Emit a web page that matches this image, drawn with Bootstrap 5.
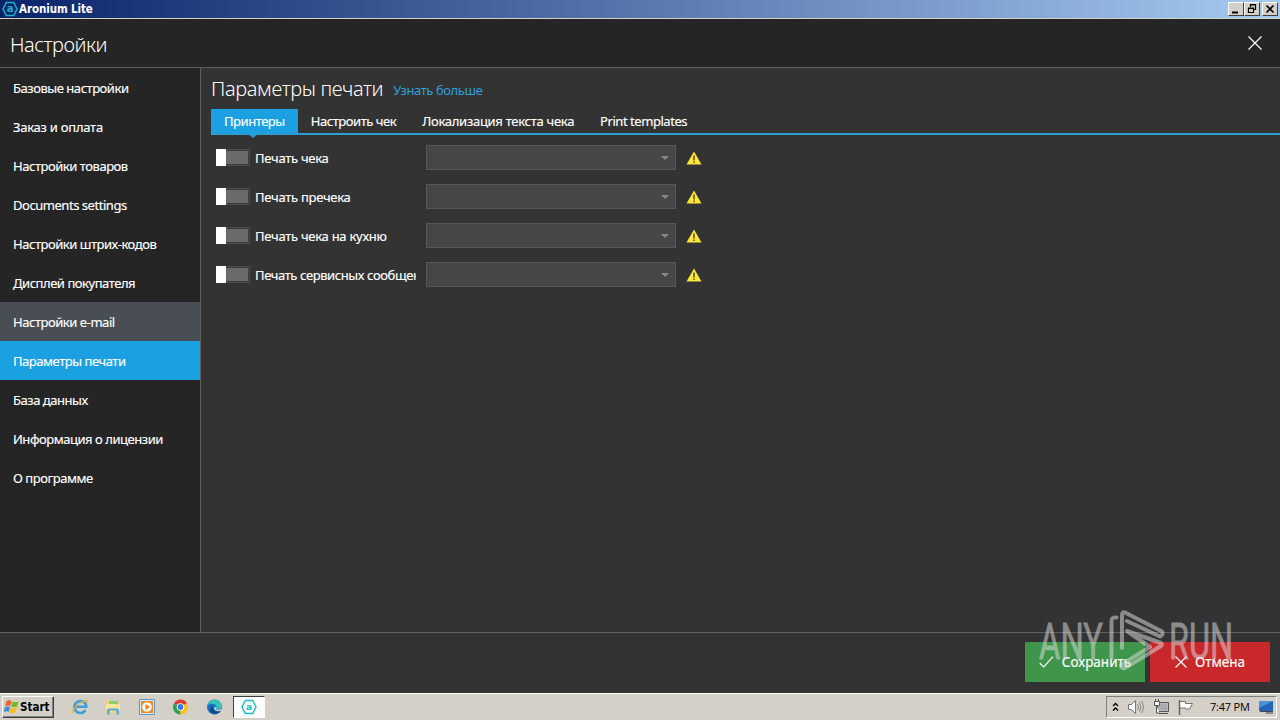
<!DOCTYPE html>
<html lang="ru">
<head>
    <meta charset="UTF-8">
    <meta name="viewport" content="width=device-width, initial-scale=1.0">
    <title>Aronium Lite</title>
    <!-- Bootstrap CSS -->
    <link href="https://cdn.jsdelivr.net/npm/bootstrap@5.3.0/dist/css/bootstrap.min.css" rel="stylesheet">
    <style>
        body {
            height: 720px;
            background-color: #333;
            color: #fff;
            font-family: "Noto Sans", "Open Sans", sans-serif;
            font-size: 13px;
            line-height: 18px;
        }
        svg {
            display: block;
            flex-shrink: 0;
        }
        .titlebar {
            height: 19px;
            background: linear-gradient(90deg, #0a246a, #a6caf0);
            border-bottom: 1px solid #d4d0c8;
            font: bold 11px/17px "DejaVu Sans", sans-serif;
            padding: 0 2px;
        }
        .titlebar .app-name {
            font: bold 11.5px/17px "DejaVu Sans Condensed", "DejaVu Sans", sans-serif;
            letter-spacing: -.1px;
            margin-left: 1px;
        }
        .win-btn {
            width: 16px;
            height: 14px;
            background-color: #d4d0c8;
            border: 1px solid;
            border-color: #fff #404040 #404040 #fff;
        }
        .win-btn:last-child {
            margin-left: 2px;
        }
        .page-head {
            height: 49px;
            background-color: #252525;
            border-bottom: 1px solid #606060;
            padding: 0 18px 0 10px;
        }
        .page-head h1 {
            font-size: 20px;
            font-weight: 300;
            line-height: 28px;
            letter-spacing: -.45px;
            padding-top: 3px;
        }
        .side-menu {
            width: 201px;
            background-color: #252525;
            border-right: 1px solid #606060;
            letter-spacing: -.46px;
            -webkit-text-stroke: .15px #fff;
        }
        .side-menu a {
            height: 39px;
            padding: 0 0 0 13px;
            color: #fff;
            text-decoration: none;
            display: flex;
            align-items: center;
        }
        .side-menu a.hovered {
            background-color: #494d54;
        }
        .side-menu a.active {
            background-color: #1ba1e2;
        }
        .spaced-more {
            letter-spacing: -.25px;
        }
        .settings-pane {
            padding: 7px 0 0 10px;
        }
        .settings-pane h2 {
            font-size: 20px;
            font-weight: 300;
            line-height: 28px;
            letter-spacing: -.36px;
        }
        .learn-more {
            color: #2f9fd8;
            text-decoration: none;
            letter-spacing: -.42px;
            padding: 1px 0 0 2px;
        }
        .tab-strip {
            height: 26px;
            margin-top: 6px;
            border-bottom: 2px solid #2c9dd1;
            letter-spacing: -.45px;
            -webkit-text-stroke: .15px #fff;
        }
        .tab-strip a {
            padding: 3px 13px 0;
            color: #fff;
            text-decoration: none;
            white-space: nowrap;
        }
        .tab-strip a.spaced-more {
            letter-spacing: -.28px;
        }
        .tab-strip a.active {
            background-color: #1ba1e2;
            position: relative;
        }
        .tab-strip a.active::after {
            content: "";
            position: absolute;
            left: 37px;
            top: 25px;
            border: 5px solid transparent;
            border-top: 4px solid #2c9dd1;
            border-bottom: 0;
        }
        .printer-list {
            padding-top: 3px;
        }
        .printer-row {
            height: 39px;
            padding-left: 5px;
        }
        .toggle {
            width: 34px;
            height: 17px;
            border: 1px solid #4c4c4c;
            border-left: 0;
            background-color: #3c3c3c;
            display: flex;
        }
        .toggle::before {
            content: "";
            width: 10px;
            height: 17px;
            margin-top: -1px;
            background-color: #fff;
        }
        .toggle::after {
            content: "";
            flex: 1;
            margin: 1px;
            margin-left: 0;
            background-color: #6b6b6b;
        }
        .printer-label {
            width: 161px;
            margin: 1px 10px 0 5px;
            white-space: nowrap;
            overflow: hidden;
            letter-spacing: -.27px;
            -webkit-text-stroke: .15px #fff;
        }
        .printer-row:last-child .printer-label {
            letter-spacing: -.4px;
        }
        .combo {
            width: 250px;
            height: 25px;
            background-color: #464646;
            border: 1px solid #565656;
            padding-right: 6px;
            margin-right: 10px;
        }
        .page-foot {
            height: 61px;
            border-top: 1px solid #606060;
            padding: 9px 10px 0 0;
            gap: 5px;
            position: relative;
        }
        .page-foot .btn {
            width: 120px;
            height: 40px;
            padding: 0;
            border: 0;
            border-radius: 0;
            color: #fff;
            font-size: 13.5px;
            -webkit-text-stroke: .15px #fff;
        }
        .btn-save {
            background-color: #3f9549 !important;
        }
        .btn-cancel {
            background-color: #c9282b !important;
        }
        .watermark {
            position: absolute;
            right: 46px;
            top: -26px;
            opacity: .52;
        }
        .taskbar {
            height: 27px;
            background-color: #d4d0c8;
            border-top: 1px solid #fff;
            color: #000;
            padding: 1px 3px 1px 2px;
        }
        .start-btn {
            width: 52px;
            height: 22px;
            border: 1px solid;
            border-color: #fff #404040 #404040 #fff;
            box-shadow: inset -1px -1px #808080;
            font: bold 11.5px/20px "DejaVu Sans Condensed", "DejaVu Sans", sans-serif;
        }
        .task-active {
            width: 32px;
            height: 22px;
            background-color: #fff;
            border: 1px solid;
            border-color: #404040 #fff #fff #404040;
        }
        .tray {
            width: 171px;
            height: 22px;
            border: 1px solid;
            border-color: #808080 #fff #fff #808080;
            padding-left: 5px;
        }
        .clock {
            font: 11px/20px "Open Sans", "Noto Sans", sans-serif;
            letter-spacing: -.2px;
            white-space: nowrap;
        }
    </style>
</head>
<body class="d-flex flex-column overflow-hidden">
    <div class="titlebar d-flex align-items-center">
        <svg width="16" height="16" viewBox="0 0 16 16">
            <path d="M4.3 1.5h7.4L15 8l-3.3 6.5H4.3L1 8z" fill="none" stroke="#1ab3cf" stroke-width="1.5"/>
            <text x="8" y="11.3" text-anchor="middle" font-size="10" fill="#1ab3cf">a</text>
        </svg>
        <span class="app-name flex-grow-1">Aronium Lite</span>
        <div class="d-flex">
            <div class="win-btn"><svg width="14" height="12"><path d="M3 9.5h6" stroke="#000" stroke-width="2"/></svg></div>
            <div class="win-btn"><svg width="14" height="12"><path d="M5.5 4V1.500h5v5H9M5 2h6M3.500 5.500h5v4h-5zM3 5h6" fill="none" stroke="#000" stroke-width="1.200"/></svg></div>
            <div class="win-btn"><svg width="14" height="12"><path d="M3.500 2.500l7 7M10.500 2.500l-7 7" stroke="#000" stroke-width="1.700"/></svg></div>
        </div>
    </div>

    <header class="page-head d-flex justify-content-between align-items-center">
        <h1 class="m-0">Настройки</h1>
        <svg width="14" height="14"><path d="M.5.5l13 13M13.5.5l-13 13" stroke="#fff" stroke-width="1.2"/></svg>
    </header>

    <main class="d-flex flex-grow-1">
        <nav class="side-menu">
            <a href="#"><span>Базовые настройки</span></a>
            <a href="#"><span class="spaced-more">Заказ и оплата</span></a>
            <a href="#"><span>Настройки товаров</span></a>
            <a href="#"><span>Documents settings</span></a>
            <a href="#"><span>Настройки штрих-кодов</span></a>
            <a href="#"><span>Дисплей покупателя</span></a>
            <a href="#" class="hovered"><span>Настройки e-mail</span></a>
            <a href="#" class="active"><span>Параметры печати</span></a>
            <a href="#"><span>База данных</span></a>
            <a href="#"><span>Информация о лицензии</span></a>
            <a href="#"><span>О программе</span></a>
        </nav>
        <section class="settings-pane flex-grow-1">
            <div class="d-flex align-items-center">
                <h2 class="m-0">Параметры печати</h2>
                <a href="#" class="learn-more ms-2">Узнать больше</a>
            </div>
            <div class="tab-strip d-flex">
                <a href="#" class="active">Принтеры</a>
                <a href="#">Настроить чек</a>
                <a href="#" class="spaced-more">Локализация текста чека</a>
                <a href="#">Print templates</a>
            </div>
            <div id="printers" class="printer-list"></div>
        </section>
    </main>

    <footer class="page-foot d-flex justify-content-end">
        <button class="btn btn-save d-flex align-items-center justify-content-center">
            <svg class="me-2" width="15" height="12"><path d="M.7 7l4 4L14 .7" fill="none" stroke="#fff" stroke-width="1.2"/></svg>
            <span>Сохранить</span>
        </button>
        <button class="btn btn-cancel d-flex align-items-center justify-content-center">
            <svg class="me-2" width="12" height="12"><path d="M.5.5l11 11M11.5.5l-11 11" stroke="#fff" stroke-width="1.2"/></svg>
            <span>Отмена</span>
        </button>
        <svg class="watermark" width="196" height="68" viewBox="0 0 196 68" font-family="Roboto" font-size="50" fill="#ddd">
            <text x="1" y="52" textLength="64" lengthAdjust="spacingAndGlyphs" stroke="#ddd" stroke-width=".8">ANY</text>
            <text x="131" y="52" textLength="64" lengthAdjust="spacingAndGlyphs" stroke="#ddd" stroke-width=".8">RUN</text>
            <g fill="none" stroke="#ddd" stroke-width="4" stroke-linejoin="round" stroke-linecap="round">
                <path d="M73.500 51V14q0-4 5-3.500"/>
                <path d="M84 41V8q0-4 4-2l36 18.500q2 3-2 5L89 14"/>
                <path d="M89 24l34 12q2 1.500 0 3L87 61q-4 1-4-3l29-18L89 24"/>
            </g>
        </svg>
    </footer>

    <div class="taskbar d-flex align-items-center">
        <div class="start-btn d-flex align-items-center">
            <svg width="17" height="16" viewBox="0 0 16 16">
                <path d="M3 2q3-1.500 5 0L6.800 7q-2-1.200-5 0z" fill="#e8622c"/>
                <path d="M9 2.500q3 1.500 6 0L13.600 7.500q-3 1.200-6 0z" fill="#79b928"/>
                <path d="M1.500 8q3-1.200 5 0l-1.200 5q-2-1.400-5 0z" fill="#3c8ed8"/>
                <path d="M7.400 8.500q3 1.400 6 0l-1.300 5q-3 1.300-6 0z" fill="#f6bd20"/>
            </svg>
            <span>Start</span>
        </div>
        <div class="d-flex align-items-center flex-grow-1" id="pinned">
            <svg width="50" height="18" viewBox="0 0 50 18">
                <path d="M31.500 12a6 6 0 1 1 .8-3.300H21" fill="none" stroke="#3d9fdc" stroke-width="2.600"/>
                <path d="M19 15c-2-2 3-8 9-11s7-1.500 4.500 1" fill="none" stroke="#e5b93a" stroke-width="1.300"/>
            </svg>
            <svg width="34" height="18" viewBox="0 0 34 18">
                <path d="M1 2h5l1 2h8v11H1z" fill="#f0d27a"/>
                <path d="M5 3h9v3H5z" fill="#8ecb74"/>
                <path d="M2 6h14v7H2z" fill="#f8e5a0"/>
                <path d="M3 16.500v-4q0-2 2-2h8q2 0 2 2v4h-2.500v-4h-7v4z" fill="#58a9dc"/>
            </svg>
            <svg width="34" height="18" viewBox="0 0 34 18">
                <path d="M1.500 1.500h15v15h-15z" fill="#d9eafa" stroke="#5c9bd2"/>
                <path d="M3 3h12v12H3z" fill="#f28a1c"/>
                <circle cx="9" cy="9" r="4.800" fill="#fff"/>
                <path d="M7.500 6l4.500 3L7.500 12z" fill="#f07a10"/>
            </svg>
            <svg width="34" height="18" viewBox="0 0 34 18">
                <path d="M8.500 9L2 5.200A7.500 7.500 0 0 1 15 5.200z" fill="#e33b2e"/>
                <path d="M8.500 9L2 5.200A7.500 7.500 0 0 0 8.500 16.500z" fill="#2ba24c"/>
                <path d="M8.500 9L15 5.200A7.500 7.500 0 0 1 8.500 16.500z" fill="#fbc116"/>
                <circle cx="8.500" cy="9" r="3.800" fill="#fff"/>
                <circle cx="8.500" cy="9" r="2.900" fill="#3b78e7"/>
            </svg>
            <svg width="27" height="18" viewBox="0 0 27 18">
                <circle cx="8.500" cy="9" r="7.500" fill="#1674c8"/>
                <path d="M1.500 7C4 0 15 0 16 8c0 4-6 4-6 2 2-3-4-6-8.500-3z" fill="#36c3b5"/>
                <path d="M7 8c-1 4 3 7 8 4.500-3 5-10 4-11 0-.5-2 1-4 3-4.500z" fill="#114a8b"/>
                <path d="M9.500 9c-1.500 3 2 4.500 6 2.500" fill="none" stroke="#d4d0c8" stroke-width="1.600"/>
            </svg>
            <div class="task-active d-flex align-items-center justify-content-center">
                <svg width="16" height="16" viewBox="0 0 16 16">
                    <path d="M4.300 1.500h7.400L15 8l-3.300 6.500H4.300L1 8z" fill="none" stroke="#19bccb" stroke-width="1.400"/>
                    <text x="8" y="11.300" text-anchor="middle" font-family="DejaVu Sans" font-weight="bold" font-size="9.500" fill="#19bccb">a</text>
                </svg>
            </div>
        </div>
        <div class="tray d-flex align-items-center">
            <svg width="7" height="10"><path d="M1 4l2.500-2.500L6 4M1 8.500L3.500 6 6 8.500" fill="none" stroke="#000" stroke-width="1.400"/></svg>
            <svg class="ms-2" width="18" height="16" viewBox="0 0 18 16">
                <path d="M1.500 5.500h3l4-4v13l-4-4h-3z" fill="#fff" stroke="#777"/>
                <path d="M10.500 5q2 3 0 6M12.500 3.500q3 4.500 0 9M14.500 2q4 6 0 12" fill="none" stroke="#888"/>
            </svg>
            <svg class="ms-2" width="17" height="16" viewBox="0 0 17 16">
                <path d="M4.500 3.500h11v9h-11z" fill="#bbb" stroke="#555"/>
                <path d="M6 5h8v6H6z" fill="#aaa"/>
                <path d="M6 14.500h9M1.500 2.500h5v4h-5zM2.500 0v3M5.500 0v3M3.500 7v7h3" fill="#fff" stroke="#555"/>
            </svg>
            <svg class="ms-2" width="16" height="16" viewBox="0 0 16 16">
                <path d="M1.500 2.500h6v2h7l-3 5.500h-4V9h-6z" fill="#fff" stroke="#777"/>
                <path d="M1.500 1v15" stroke="#666" stroke-width="1.500"/>
            </svg>
            <span class="clock ms-3">7:47 PM</span>
            <svg class="ms-2" width="16" height="16" viewBox="0 0 16 16">
                <path d="M1 2h14v10H1z" fill="#2465b8"/>
                <path d="M1 2h14L1 9z" fill="#4d91db"/>
                <path d="M2 12.500h13M8 14h7" stroke="#445" fill="none"/>
            </svg>
        </div>
    </div>

    <!-- Bootstrap JS -->
    <script src="https://cdn.jsdelivr.net/npm/bootstrap@5.3.0/dist/js/bootstrap.bundle.min.js"></script>
    <script>
        const labels = ['Печать чека', 'Печать пречека', 'Печать чека на кухню', 'Печать сервисных сообщений'];

        document.getElementById('printers').innerHTML = labels.map(label => `
            <div class="printer-row d-flex align-items-center">
                <div class="toggle"></div>
                <div class="printer-label">${label}</div>
                <div class="combo d-flex align-items-center justify-content-end">
                    <svg width="8" height="4"><path d="M0 0h8L4 4z" fill="#888"/></svg>
                </div>
                <svg width="16" height="14" viewBox="0 0 16 14">
                    <path d="M8 .5L15.500 13.500H.5z" fill="#fbe63a"/>
                    <path d="M8 4.500v5M8 10.500v1.500" stroke="#5a4a10" stroke-width="1.500"/>
                </svg>
            </div>`).join('');
    </script>
</body>
</html>
